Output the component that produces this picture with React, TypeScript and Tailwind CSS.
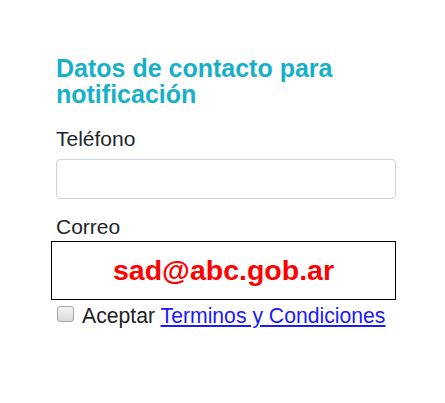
import { useState } from "react";

export default function App() {
  const [accepted, setAccepted] = useState(false);

  return (
    <div className="min-h-[403px] w-[445px] bg-white pl-[56px] pt-[55px] font-['Liberation_Sans',Arial,sans-serif]">
      <div className="w-[340px]">
        <h2 className="text-[25px] font-bold leading-[26px] text-[#17b0c9]">
          Datos de contacto para notificación
        </h2>

        {/* Teléfono */}
        <label className="mt-[20px] block text-[21px] leading-[24px] text-[#212529]">
          Teléfono
        </label>
        <input
          type="tel"
          className="mt-[8px] block h-[40px] w-[340px] rounded-[4px] border border-[#ced4da] bg-white px-3 outline-none"
        />

        {/* Correo */}
        <label className="mt-[16px] block text-[21px] leading-[24px] text-[#212529]">
          Correo
        </label>
        <div className="-ml-[5px] mt-[2px] flex h-[59px] w-[345px] items-center justify-center border border-black">
          <span className="text-[28.5px] font-bold text-[#ff0000]">sad@abc.gob.ar</span>
        </div>

        <div className="mt-[4px] flex items-start text-[21.2px] leading-[24px] text-[#222]">
          <input
            type="checkbox"
            checked={accepted}
            onChange={(e) => setAccepted(e.target.checked)}
            className="mt-[2px] ml-[1px] h-[16px] w-[17px] shrink-0 appearance-none rounded-[3px] border border-[#a6a6a6] bg-linear-to-b from-[#f6f6f6] to-[#d9d9d9]"
          />
          <span className="ml-[8px]">
            Aceptar{" "}
            <a href="#" className="text-[#1a1aff] underline">
              Terminos y Condiciones
            </a>
          </span>
        </div>
      </div>
    </div>
  );
}
